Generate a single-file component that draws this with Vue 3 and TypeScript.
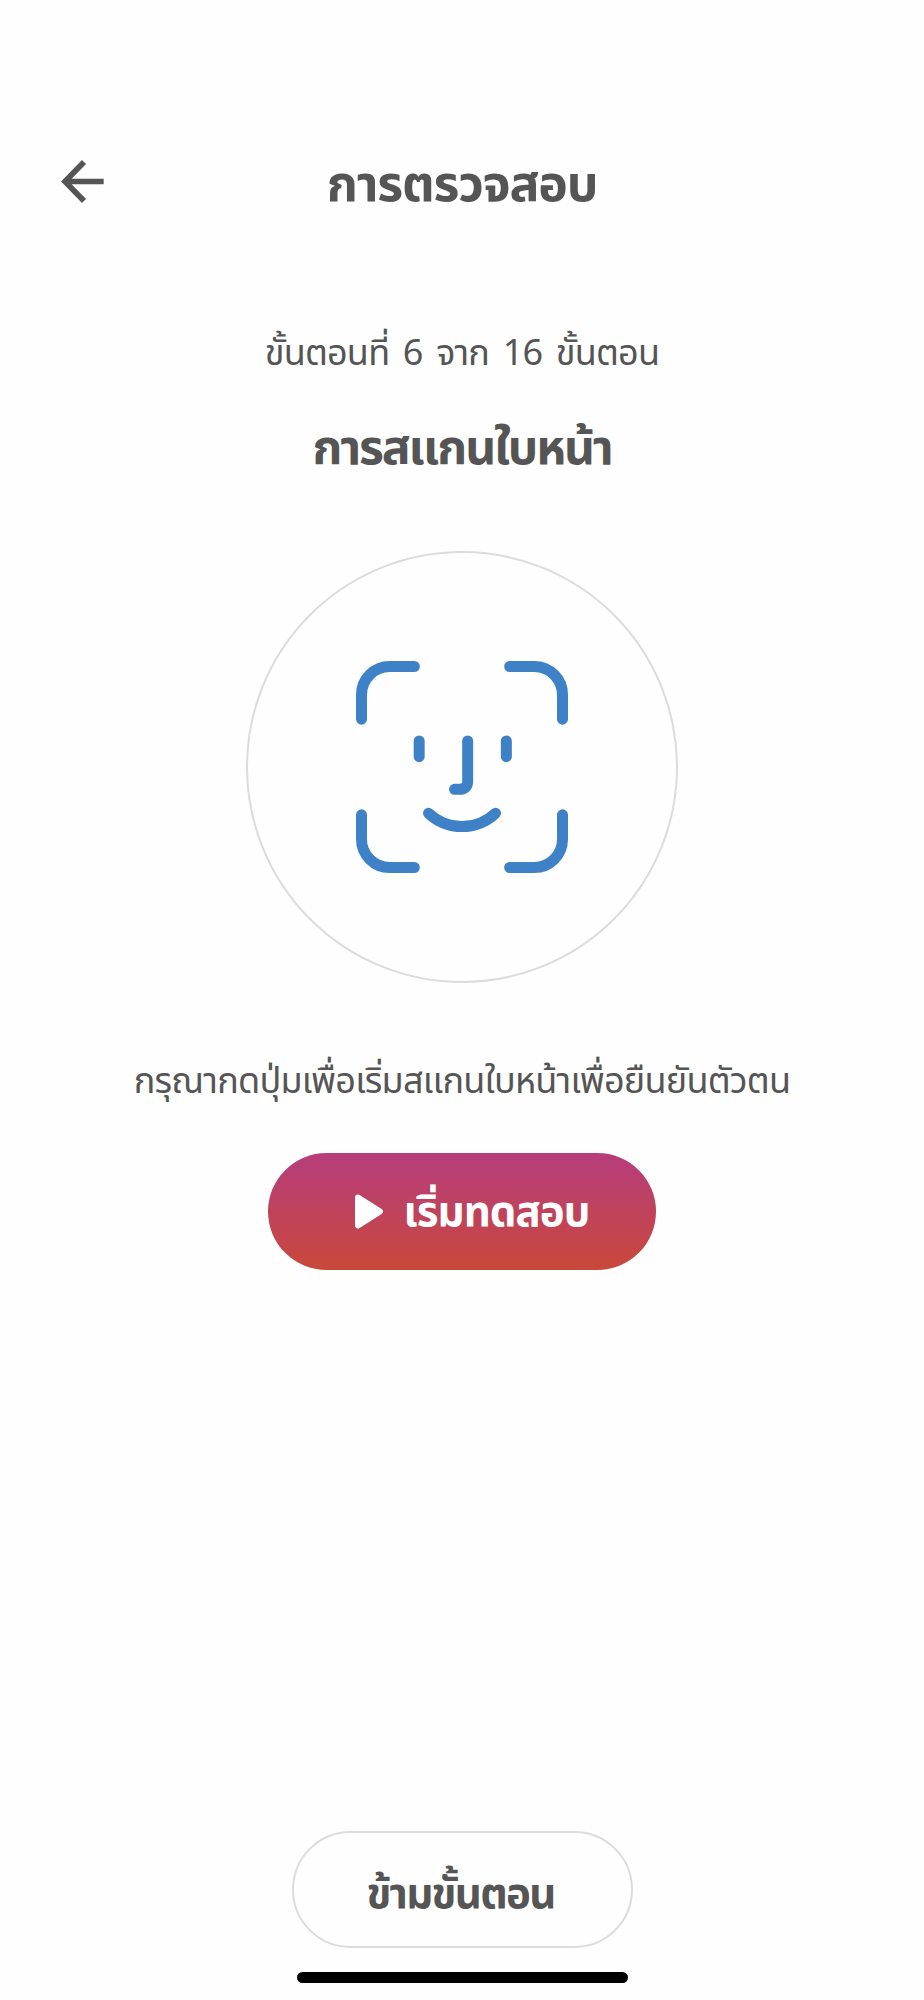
<script setup lang="ts">
const title: string = 'การตรวจสอบ'
const currentStep: number = 6
const totalSteps: number = 16
</script>

<template>
  <div class="screen">
    <header class="header">
      <button class="back" type="button" aria-label="ย้อนกลับ">
        <svg width="43" height="43" viewBox="0 0 129 129" fill="none" stroke="#555" stroke-width="17">
          <path d="M128 64.5H16M69 6L12 64.5L69 123" />
        </svg>
      </button>
      <h1 class="title">{{ title }}</h1>
    </header>

    <main class="content">
      <p class="step">ขั้นตอนที่ {{ currentStep }} จาก {{ totalSteps }} ขั้นตอน</p>
      <h2 class="heading">การสแกนใบหน้า</h2>
      <div class="circle">
        <svg
          class="face"
          viewBox="0 0 636 636"
          fill="none"
          stroke="#3f81c7"
          stroke-width="33"
          stroke-linecap="round"
        >
          <path d="M16.5 174.5V101A84.5 84.5 0 0 1 101 16.5H175" />
          <path d="M461 16.5H535A84.5 84.5 0 0 1 619.5 101V174.5" />
          <path d="M619.5 461.5V535A84.5 84.5 0 0 1 535 619.5H461" />
          <path d="M175 619.5H101A84.5 84.5 0 0 1 16.5 535V461.5" />
          <path d="M189.5 240V287M451 240V287" />
          <path d="M335 240V360Q335 385 310 385H295.5" />
          <path d="M217.5 456.5A146 146 0 0 0 418.5 456.5" />
        </svg>
      </div>
      <p class="description">กรุณากดปุ่มเพื่อเริ่มสแกนใบหน้าเพื่อยืนยันตัวตน</p>
      <button class="start" type="button">
        <svg width="28" height="35" viewBox="0 0 28 35" fill="#fff" stroke="#fff" stroke-width="6" stroke-linejoin="round">
          <path d="M3 3.6L25 17.5L3 31.4Z" />
        </svg>
        <span class="start-label">เริ่มทดสอบ</span>
      </button>
    </main>

    <footer class="footer">
      <button class="skip" type="button">ข้ามขั้นตอน</button>
      <div class="home-bar"></div>
    </footer>
  </div>
</template>

<style>
body {
  background: #fefefe;
}
</style>

<style scoped>
.screen {
  box-sizing: border-box;
  display: flex;
  flex-direction: column;
  width: 924px;
  height: 2000px;
  padding: 146px 0 17px;
  background: #fefefe;
  color: #555;
  font-family: 'Noto Sans Thai', 'Noto Sans', sans-serif;
}
h1,
h2,
p {
  margin: 0;
  white-space: nowrap;
}
button {
  box-sizing: border-box;
  padding: 0;
  border: 0;
  background: none;
  color: inherit;
  font: inherit;
  white-space: nowrap;
}
.header {
  display: grid;
  grid-template-columns: 104px 1fr 104px;
  height: 80px;
}
.back {
  display: flex;
  justify-content: flex-end;
  padding-top: 14px;
}
.title {
  font-size: 50px;
  line-height: 80px;
  font-weight: 700;
  letter-spacing: -1.2px;
  text-align: center;
}
.content {
  display: flex;
  flex: 1;
  flex-direction: column;
  align-items: center;
  padding-top: 103px;
}
.step {
  font-size: 36px;
  line-height: 50px;
  letter-spacing: -0.8px;
  word-spacing: 5px;
}
.heading {
  margin-top: 36px;
  font-size: 48px;
  line-height: 70px;
  font-weight: 700;
  letter-spacing: -2.1px;
}
.circle {
  box-sizing: border-box;
  display: flex;
  align-items: center;
  justify-content: center;
  width: 432px;
  height: 432px;
  margin-top: 66px;
  border: 2px solid #dcdcdc;
  border-radius: 50%;
}
.face {
  width: 212px;
  height: 212px;
}
.description {
  margin-top: 74px;
  font-size: 36px;
  line-height: 50px;
  letter-spacing: -0.75px;
}
.start {
  display: flex;
  align-items: center;
  gap: 20.5px;
  width: 388px;
  height: 117px;
  margin-top: 46px;
  padding-left: 87px;
  border-radius: 59px;
  background: linear-gradient(#b63d7d, #c9483b);
  color: #fff;
}
.start-label {
  margin-top: 3px;
  font-size: 42px;
  line-height: 60px;
  font-weight: 700;
  letter-spacing: -0.95px;
}
.footer {
  display: flex;
  flex-direction: column;
  align-items: center;
}
.skip {
  width: 341px;
  height: 117px;
  padding: 11px 3px 0 0;
  border: 2px solid #dcdcdc;
  border-radius: 59px;
  font-size: 42px;
  font-weight: 700;
  letter-spacing: -1.7px;
}
.home-bar {
  width: 331px;
  height: 11px;
  margin-top: 24px;
  border-radius: 6px;
  background: #000;
}
</style>
